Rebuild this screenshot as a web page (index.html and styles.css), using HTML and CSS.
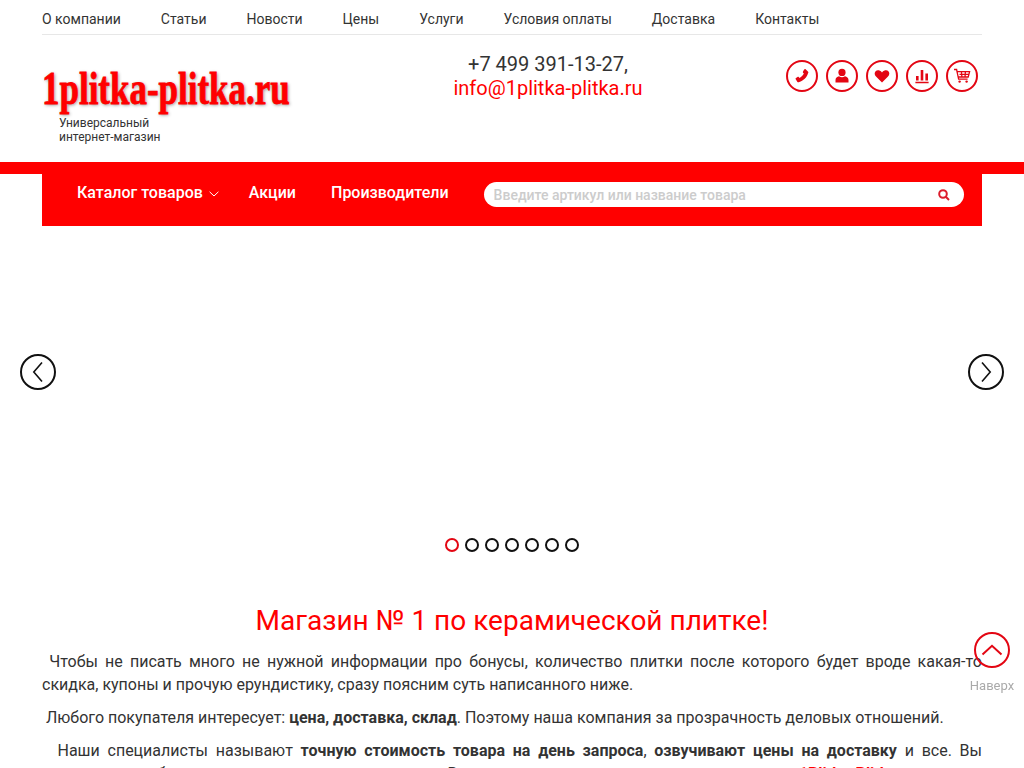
FILE: index.html
```html
<!DOCTYPE html>
<html>
<head>
<meta charset="UTF-8">
<title>1plitka-plitka.ru</title>
<link rel="stylesheet" href="styles.css">
</head>
<body>
<div class="wrap">
    <ul class="topnav">
        <li><a href="#">О компании</a></li>
        <li><a href="#">Статьи</a></li>
        <li><a href="#">Новости</a></li>
        <li><a href="#">Цены</a></li>
        <li><a href="#">Услуги</a></li>
        <li><a href="#">Условия оплаты</a></li>
        <li><a href="#">Доставка</a></li>
        <li><a href="#">Контакты</a></li>
    </ul>
    <div class="header">
        <div class="logo">
            <a class="logoName" href="#"><span>1plitka-plitka.ru</span></a>
            <div class="tagline">Универсальный<br>интернет-магазин</div>
        </div>
        <div class="contacts">
            <div class="phone">+7 499 391-13-27,</div>
            <a class="mail" href="#">info@1plitka-plitka.ru</a>
        </div>
        <div class="iconRow">
            <a class="roundIcon" href="#"><svg viewBox="0 0 16 16" width="16" height="16"><path d="M11.6 1.2 13.9 3.4C14.5 4 14.5 4.7 14 5.3 13.4 8.8 8.8 13.4 5.3 14 4.7 14.5 4 14.5 3.4 13.9L1.9 11.5C1.4 11 1.5 10.4 2 10L3.5 9C4 8.7 4.5 8.8 4.9 9.2L5.6 9.9C7.4 9 9 7.4 9.9 5.6L9.2 4.9C8.8 4.5 8.7 4 9 3.5L10.2 1.5C10.5 1 11.1.8 11.6 1.2Z"/><path d="M4.6 6.4 5.8 7.4 5 8.2 3.8 7.2Z" fill="#fff"/></svg></a>
            <a class="roundIcon" href="#"><svg viewBox="0 0 16 16" width="16" height="16"><circle cx="8" cy="4.4" r="3.6"/><path d="M1.5 14.6V12C1.5 9.8 3.2 8.6 5 8.2 6 9 7 9.3 8 9.3S10 9 11 8.2C12.8 8.6 14.5 9.8 14.5 12V14.6Z"/></svg></a>
            <a class="roundIcon" href="#"><svg viewBox="0 0 16 16" width="16" height="16"><path d="M8 14.4 2 8.6C.3 6.9.3 4.6 1.6 3.3 3 1.9 5.6 1.9 8 4.4 10.4 1.9 13 1.9 14.4 3.3 15.7 4.6 15.7 6.9 14 8.6Z"/></svg></a>
            <a class="roundIcon" href="#"><svg viewBox="0 0 16 16" width="16" height="16"><path d="M2 8H4.6V12.6H2ZM6.7 2H9.3V12.6H6.7ZM11.4 5.4H14V12.6H11.4ZM1.4 13.8H14.6V15.2H1.4Z"/></svg></a>
            <a class="roundIcon" href="#"><svg class="cartIcon" viewBox="0 0 18 16" width="18" height="16"><path d="M1 1.5H3.6L5.6 11.2H14.6M4.2 3.6H16.6L15.2 9H5.2M6.5 6.3H15.8M8.4 3.6 8.9 9M12.4 3.6 12 9"/><circle cx="6.6" cy="13.6" r="1.2"/><circle cx="13.6" cy="13.6" r="1.2"/></svg></a>
        </div>
    </div>
</div>

<div class="redBand">
    <div class="mainMenu">
        <a class="menuItem" href="#">Каталог товаров<svg class="chevron" viewBox="0 0 10 6" width="10" height="6"><path d="M.6.8 5 5 9.4.8"/></svg></a>
        <a class="menuItem akcii" href="#">Акции</a>
        <a class="menuItem" href="#">Производители</a>
        <div class="search">
            <input type="text" placeholder="Введите артикул или название товара">
            <svg viewBox="0 0 12 12" width="12" height="12"><circle cx="5" cy="5" r="3.8"/><path d="M7.8 7.8 11 11"/></svg>
        </div>
    </div>
</div>

<div class="slider">
    <a class="arrow arrowLeft" href="#"><svg viewBox="0 0 12 22" width="12" height="22"><path d="M10 1.5 1.8 11 10 20.5"/></svg></a>
    <a class="arrow arrowRight" href="#"><svg viewBox="0 0 12 22" width="12" height="22"><path d="M2 1.5 10.2 11 2 20.5"/></svg></a>
    <div class="dots">
        <span class="dot active"></span>
        <span class="dot"></span>
        <span class="dot"></span>
        <span class="dot"></span>
        <span class="dot"></span>
        <span class="dot"></span>
        <span class="dot"></span>
    </div>
</div>

<div class="wrap content">
    <h1>Магазин № 1 по керамической плитке!</h1>
    <p>&nbsp;Чтобы не писать много не нужной информации про бонусы, количество плитки после которого будет вроде какая-то скидка, купоны и прочую ерундистику, сразу поясним суть написанного ниже.</p>
    <p>&nbsp;Любого покупателя интересует: <b>цена, доставка, склад</b>. Поэтому наша компания за прозрачность деловых отношений.</p>
    <p>&nbsp; Наши специалисты называют <b>точную стоимость товара на день запроса</b>, <b>озвучивают цены на доставку</b> и все. Вы сравниваете, обдумываете и принимаете решение. Ведь от хорошего предложения в магазине <a class="shopLink" href="#">1Plitka-Plitka.ru</a> <b>пришло</b> время отказаться от лишних обещаний и работать честно с каждым клиентом.</p>
</div>

<a class="toTop" href="#">
    <span class="toTopCircle"><svg viewBox="0 0 22 12" width="22" height="12"><path d="M1.5 10.5 11 1.8 20.500 10.500"/></svg></span>
    <span class="toTopText">Наверх</span>
</a>
</body>
</html>
```

FILE: styles.css
```css
html, body {
    margin: 0;
    height: 768px;
    overflow: hidden;
}
body {
    font-family: Roboto, "Liberation Sans", sans-serif;
    color: #333;
    background: #fff;
    font-size: 16px;
}
a {
    text-decoration: none;
    color: inherit;
}
.wrap {
    width: 940px;
    margin: 0 auto;
}

.topnav {
    display: flex;
    gap: 40px;
    margin: 0;
    padding: 0;
    height: 34px;
    line-height: 38px;
    list-style: none;
    font-size: 14px;
    border-bottom: 1px solid #e7e7e7;
    color: #333;
}

.header {
    display: flex;
    height: 127px;
}
.logo {
    width: 340px;
    padding-top: 26px;
}
.logoName {
    display: block;
    height: 55px;
    color: #f00;
    font-family: "Liberation Serif", serif;
    font-weight: bold;
    font-size: 46px;
    line-height: 55px;
    white-space: nowrap;
    text-shadow: 1px 1px 4px #888;
}
.logoName span {
    display: inline-block;
    transform: scaleX(.76);
    transform-origin: 0 0;
    -webkit-text-stroke: .8px #f00;
}
.tagline {
    margin-left: 17px;
    font-size: 12px;
    line-height: 14px;
    color: #333;
}
.contacts {
    width: 332px;
    padding-top: 17px;
    text-align: center;
    font-size: 20px;
    line-height: 24px;
}
.mail {
    color: #f00;
}
.iconRow {
    display: flex;
    flex: 1;
    justify-content: flex-end;
    gap: 8px;
    padding: 25px 4px 0 0;
}
.roundIcon {
    display: flex;
    align-items: center;
    justify-content: center;
    box-sizing: border-box;
    width: 32px;
    height: 32px;
    border: 2px solid #e30613;
    border-radius: 50%;
}
.roundIcon svg {
    fill: #e30613;
}
.roundIcon .cartIcon {
    fill: none;
    stroke: #e30613;
    stroke-width: 1.3;
}
.cartIcon circle {
    fill: #e30613;
    stroke: none;
}

.redBand {
    border-top: 12px solid #f00;
}
.mainMenu {
    display: flex;
    box-sizing: border-box;
    width: 940px;
    height: 52px;
    margin: 0 auto;
    padding-left: 35px;
    background: #f00;
    color: #fff;
    font-weight: 500;
    line-height: 38px;
}
.menuItem {
    margin-right: 35px;
}
.chevron {
    margin-left: 6px;
    vertical-align: 1px;
    fill: none;
    stroke: #fff;
    stroke-width: 1;
}
.menuItem:first-child {
    margin-right: 30px;
}
.search {
    display: flex;
    align-items: center;
    box-sizing: border-box;
    width: 480px;
    height: 25px;
    margin: 8px 0 0 0;
    padding: 0 14px 0 10px;
    background: #fff;
    border-radius: 13px;
}
.search input {
    flex: 1;
    border: 0;
    outline: 0;
    padding: 0;
    background: none;
    font-family: inherit;
    font-size: 14px;
    font-weight: 500;
}
.search input::placeholder {
    color: #ccc;
    opacity: 1;
}
.search svg {
    fill: none;
    stroke: #dc1c2c;
    stroke-width: 2;
}

.slider {
    position: relative;
    height: 364px;
}
.arrow {
    position: absolute;
    top: 128px;
    display: flex;
    align-items: center;
    justify-content: center;
    box-sizing: border-box;
    width: 36px;
    height: 36px;
    border: 2px solid #111;
    border-radius: 50%;
}
.arrow svg {
    fill: none;
    stroke: #111;
    stroke-width: 1.6;
}
.arrowLeft {
    left: 20px;
}
.arrowRight {
    right: 20px;
}
.dots {
    position: absolute;
    top: 312px;
    left: 445px;
    display: flex;
    gap: 6px;
}
.dot {
    box-sizing: border-box;
    width: 14px;
    height: 14px;
    border: 2px solid #111;
    border-radius: 50%;
}
.dot.active {
    border-color: #e30613;
}

.content h1 {
    margin: 12px 0 10px;
    font-size: 28px;
    font-weight: 400;
    line-height: 38px;
    text-align: center;
    color: #f00;
}
.content p {
    margin: 0 0 10px;
    line-height: 23px;
    text-align: justify;
}
.shopLink {
    color: #f00;
    font-weight: 700;
}

.toTop {
    position: fixed;
    top: 632px;
    right: 10px;
    display: flex;
    flex-direction: column;
    align-items: center;
    width: 44px;
}
.toTopCircle {
    display: flex;
    align-items: center;
    justify-content: center;
    box-sizing: border-box;
    width: 36px;
    height: 36px;
    border: 2px solid #e30613;
    border-radius: 50%;
}
.toTopCircle svg {
    fill: none;
    stroke: #e30613;
    stroke-width: 2;
}
.toTopText {
    margin-top: 10px;
    font-size: 13px;
    line-height: 16px;
    color: #aaa;
}
```
